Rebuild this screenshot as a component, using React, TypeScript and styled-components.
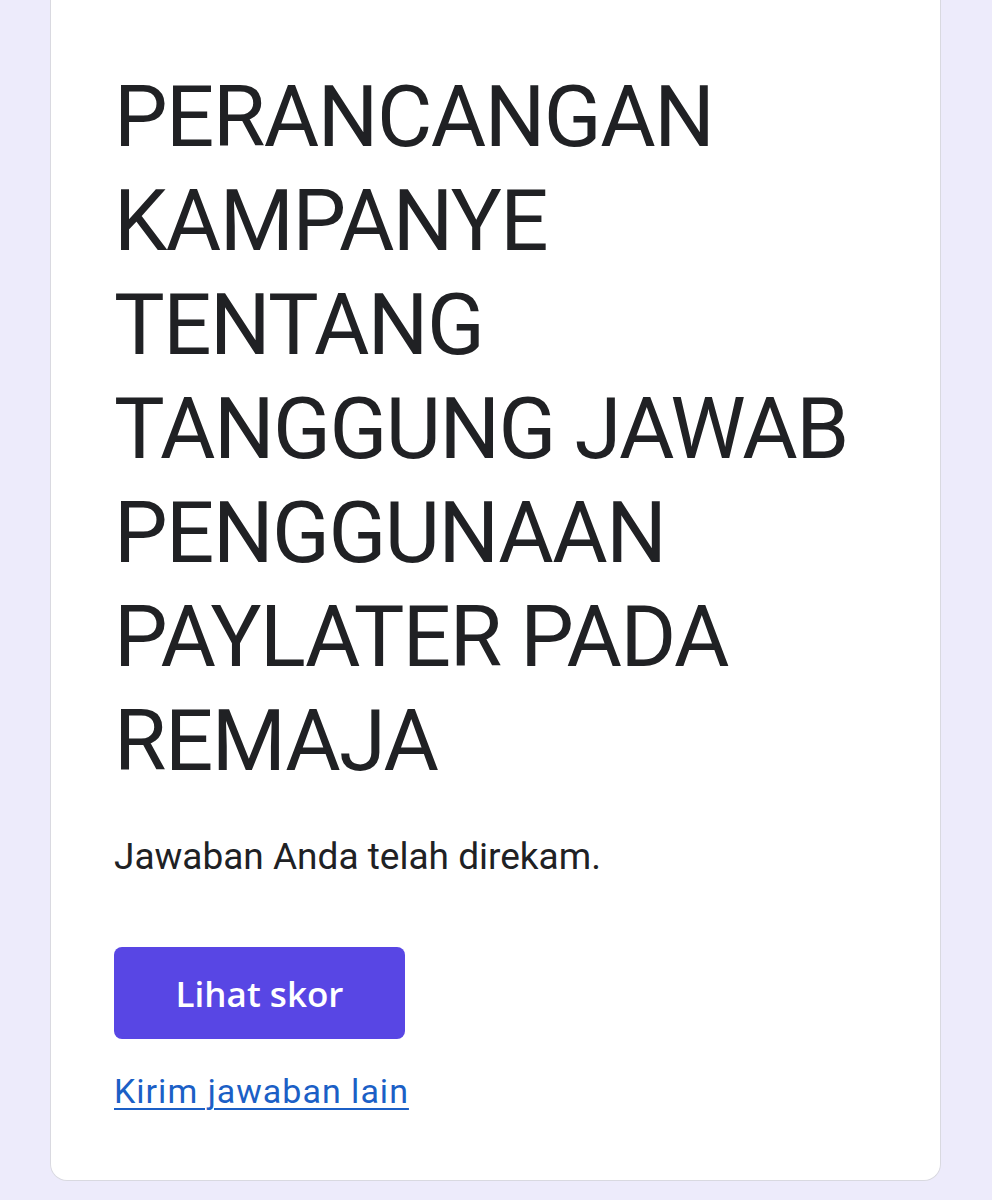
import React from 'react';
import styled, { createGlobalStyle } from 'styled-components';

const GlobalStyle = createGlobalStyle`
  html, body {
    margin: 0;
    padding: 0;
    background: #edebfb;
  }
  body {
    font-family: Roboto, "Liberation Sans", Arial, sans-serif;
  }
`;

const Page = styled.div`
  min-height: 1200px;
  padding: 0 51px 0 50px;
  box-sizing: border-box;
`;

const Card = styled.div`
  background: #ffffff;
  border: 1px solid #d9d9e0;
  border-top: none;
  border-radius: 0 0 17px 17px;
  padding: 65px 63px 69px 63px;
  box-sizing: border-box;
`;

const Title = styled.h1`
  margin: 0;
  font-family: Roboto, "Liberation Sans", Arial, sans-serif;
  font-weight: 400;
  font-size: 85px;
  line-height: 104px;
  letter-spacing: -1.5px;
  color: #202124;
`;

const Message = styled.p`
  margin: 42px 0 0;
  font-size: 37px;
  line-height: 44px;
  color: #202124;
`;

const Actions = styled.div`
  display: flex;
  flex-direction: column;
  align-items: flex-start;
`;

const ScoreButton = styled.button`
  margin-top: 68px;
  width: 291px;
  height: 92px;
  border: none;
  border-radius: 8px;
  background: #5846e4;
  color: #ffffff;
  font-family: "Open Sans", Lato, sans-serif;
  font-weight: 600;
  font-size: 35px;
  cursor: pointer;
`;

const AnotherLink = styled.a`
  margin-top: 32px;
  font-size: 34px;
  line-height: 40px;
  letter-spacing: 1px;
  color: #1b5fc6;
  text-decoration: underline;
  text-underline-offset: 5px;
  text-decoration-thickness: 2px;
`;

export default function App() {
  return (
    <>
      <GlobalStyle />
      <Page>
        <Card>
          <Title>PERANCANGAN KAMPANYE TENTANG TANGGUNG JAWAB PENGGUNAAN PAYLATER PADA REMAJA</Title>
          <Message>Jawaban Anda telah direkam.</Message>
          <Actions>
            <ScoreButton>Lihat skor</ScoreButton>
            <AnotherLink href="#">Kirim jawaban lain</AnotherLink>
          </Actions>
        </Card>
      </Page>
    </>
  );
}
